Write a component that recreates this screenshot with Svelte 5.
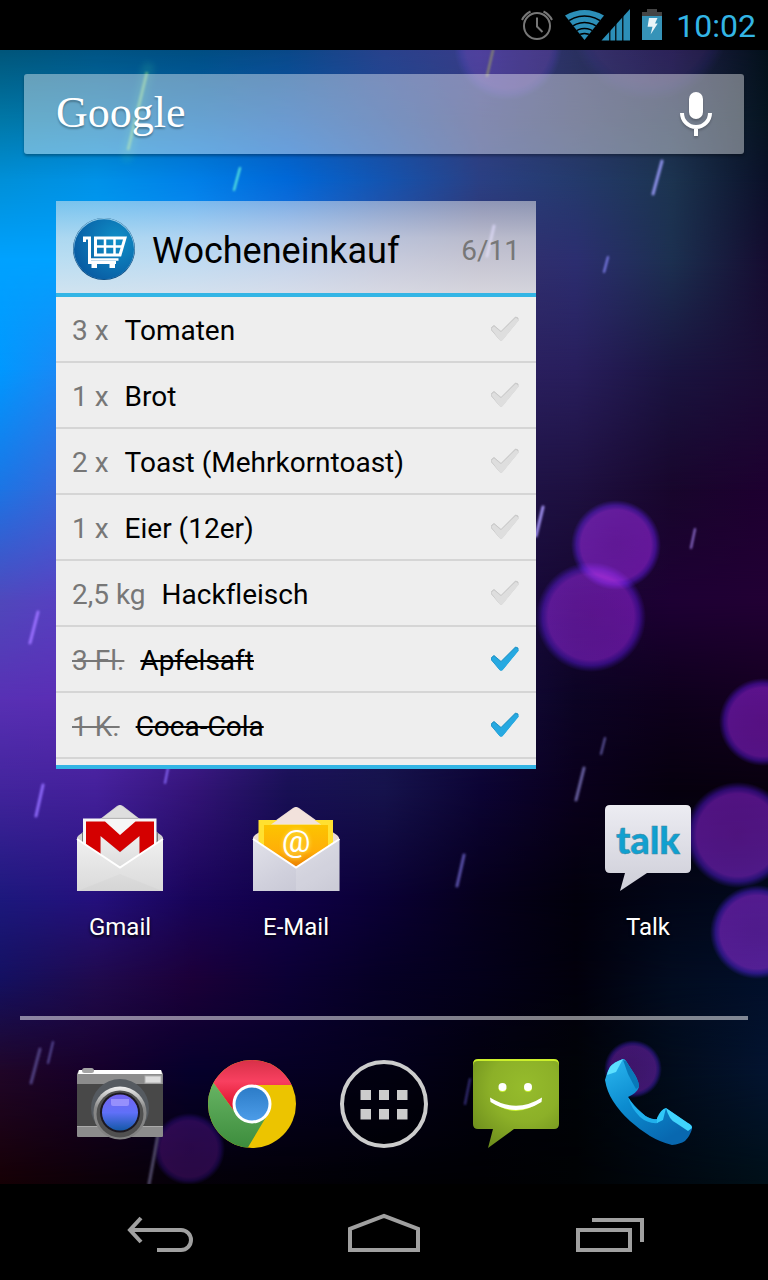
<script lang="ts">
	const items = $state([
		{ amount: '3 x', name: 'Tomaten', done: false },
		{ amount: '1 x', name: 'Brot', done: false },
		{ amount: '2 x', name: 'Toast (Mehrkorntoast)', done: false },
		{ amount: '1 x', name: 'Eier (12er)', done: false },
		{ amount: '2,5 kg', name: 'Hackfleisch', done: false },
		{ amount: '3 Fl.', name: 'Apfelsaft', done: true },
		{ amount: '1 K.', name: 'Coca-Cola', done: true }
	])

	// wallpaper colours: one row per height, nine stops from left to right
	const rows = [
		{ y: 50, stops: ['#00567a', '#005484', '#004e82', '#0a4888', '#28428c', '#383c88', '#2a3060', '#201f48', '#03101a'] },
		{ y: 120, stops: ['#0078a8', '#0074b0', '#0066b4', '#0a58b0', '#1c4a98', '#303c7c', '#2a3560', '#1a2a48', '#061420'] },
		{ y: 180, stops: ['#0090d8', '#0092e8', '#0080e8', '#0068d8', '#1454b0', '#2a4084', '#243a6c', '#1c3450', '#0a1028'] },
		{ y: 260, stops: ['#00a2ff', '#00a2ff', '#1496ff', '#2c74e0', '#3a4ea0', '#34306c', '#2c2e70', '#1c3050', '#150c30'] },
		{ y: 370, stops: ['#0098ff', '#2a80f0', '#3468d8', '#3850b0', '#343080', '#2c2060', '#281e5c', '#1a1440', '#1a0c34'] },
		{ y: 490, stops: ['#1c74e4', '#4a60d4', '#4a48c0', '#3830a0', '#281c70', '#1e1448', '#1e1040', '#18062c', '#1e0030'] },
		{ y: 600, stops: ['#5048bc', '#5c3cc4', '#5030a8', '#302080', '#1c1458', '#180c40', '#160630', '#1e0034', '#220034'] },
		{ y: 700, stops: ['#5830b4', '#5c2cb4', '#4c24a0', '#2c1870', '#181450', '#140c40', '#0c0424', '#0e001c', '#140020'] },
		{ y: 790, stops: ['#42249c', '#44209a', '#341478', '#181054', '#16134c', '#0c0434', '#0a001c', '#06000e', '#08000e'] },
		{ y: 900, stops: ['#1c187c', '#24107c', '#180458', '#100048', '#0a0034', '#06001c', '#02000c', '#020618', '#020a1e'] },
		{ y: 980, stops: ['#141060', '#200a4c', '#1c0038', '#0c0034', '#060024', '#04001a', '#02000c', '#020c20', '#020f2a'] },
		{ y: 1070, stops: ['#200628', '#16002a', '#06002c', '#060024', '#04001c', '#02000e', '#010308', '#020c1c', '#031430'] },
		{ y: 1184, stops: ['#160004', '#0c0008', '#040008', '#020006', '#000004', '#000003', '#000204', '#000810', '#001018'] }
	]

	const bokeh = [
		{ x: 508, y: 46, r: 54, o: 0.3 },
		{ x: 650, y: 20, r: 80, o: 0.15 },
		{ x: 616, y: 545, r: 45, o: 0.85 },
		{ x: 591, y: 617, r: 55, o: 0.8 },
		{ x: 763, y: 722, r: 44, o: 0.8 },
		{ x: 738, y: 835, r: 53, o: 0.8 },
		{ x: 757, y: 932, r: 47, o: 0.85 },
		{ x: 633, y: 1069, r: 29, o: 0.65 },
		{ x: 189, y: 1149, r: 36, o: 0.4 }
	]

	const streaks = [
		{ d: 'M240 168L234 190', c: '#5ff0e0', w: 2 },
		{ d: 'M493 50L487 76', c: '#8a8a70', w: 2 },
		{ d: 'M662 161L653 194', c: '#8c90e8', w: 3 },
		{ d: 'M608 257L604 272', c: '#8080f0', w: 2 },
		{ d: 'M494 226L487 256', c: '#9890e8', w: 3 },
		{ d: 'M543 507L536 536', c: '#a090f0', w: 3 },
		{ d: 'M695 529L691 548', c: '#9070d0', w: 2 },
		{ d: 'M38 612L30 643', c: '#9a70ff', w: 3 },
		{ d: 'M43 785L36 816', c: '#8c68f8', w: 3 },
		{ d: 'M168 768L165 783', c: '#8868f8', w: 2 },
		{ d: 'M605 738L601 754', c: '#6058a0', w: 2 },
		{ d: 'M584 768L576 800', c: '#6860a0', w: 3 },
		{ d: 'M464 855L457 886', c: '#5850a8', w: 3 },
		{ d: 'M53 1042L48 1063', c: '#584c98', w: 2 },
		{ d: 'M40 1049L31 1083', c: '#504080', w: 3 },
		{ d: 'M470 1079L465 1104', c: '#383080', w: 2 },
		{ d: 'M158 1135L149 1184', c: '#504868', w: 3 }
	]
</script>

<div class="phone">
	<header class="statusBar">
		<svg width="34" height="34" viewBox="520 8 34 34" fill="none" stroke="#777" stroke-width="2">
			<circle cx="537" cy="26" r="13" />
			<path d="M537 17.5V26.5L542.5 32" />
			<path d="M522 20Q524.5 14.5 530.5 11.5M552 20Q549.5 14.5 543.5 11.5" />
		</svg>
		<svg class="signal" width="66" height="34" viewBox="565 8 66 34">
			<clipPath id="fan"><path d="M584.5 40L565 15.5Q584.5 4.5 604 15.5Z" /></clipPath>
			<g clip-path="url(#fan)">
				<rect x="565" y="8" width="40" height="34" fill="#2c8fb8" />
				<g fill="none" stroke="#000" stroke-width="1.6">
					<circle cx="584.5" cy="44" r="28" />
					<circle cx="584.5" cy="44" r="21.5" />
					<circle cx="584.5" cy="44" r="15.5" />
					<circle cx="584.5" cy="44" r="10.5" />
				</g>
			</g>
			<path d="M601.5 40.5L630 9V40.5Z" fill="#2c8fb8" />
			<path d="M609.8 20V41M615.8 14V41M622.8 10V41" stroke="#000" stroke-width="1.2" />
		</svg>
		<svg width="20" height="32" viewBox="642 9 20 32">
			<path d="M647 9H657V12H662V16H642V12H647Z" fill="#444" />
			<path d="M642 16H662V40H642Z" fill="#3693b8" />
			<path d="M649 18H657.5L655 23.5H657.7L650.6 34.5L652.5 26.7H647.6Z" fill="#e8f4f8" />
		</svg>
		<time class="clock">10:02</time>
	</header>

	<main class="home">
		<svg class="wallpaper" viewBox="0 50 768 1134" preserveAspectRatio="none" aria-hidden="true">
			<defs>
				{#each rows as row, i}
					<linearGradient id="row{i}" gradientUnits="userSpaceOnUse" x1="0" x2="768" y1="0" y2="0">
						{#each row.stops as color, s}
							<stop offset={s / 8} stop-color={color} />
						{/each}
					</linearGradient>
				{/each}
				<linearGradient id="fade" x2="0" y2="1">
					<stop offset="0" stop-color="#000" />
					<stop offset="1" stop-color="#fff" />
				</linearGradient>
				<mask id="down" maskContentUnits="objectBoundingBox">
					<rect width="1" height="1" fill="url(#fade)" />
				</mask>
				<radialGradient id="bubble">
					<stop offset="0" stop-color="#5c1490" />
					<stop offset="0.78" stop-color="#601698" />
					<stop offset="0.88" stop-color="#4010a8" stop-opacity="0.75" />
					<stop offset="1" stop-color="#2c10a0" stop-opacity="0" />
				</radialGradient>
				<filter id="soft" x="-5" y="-1" width="11" height="3">
					<feGaussianBlur stdDeviation="1" />
				</filter>
				<filter id="glow" x="-2" y="-1" width="5" height="3">
					<feGaussianBlur stdDeviation="3" />
				</filter>
			</defs>
			{#each rows.slice(1) as row, i}
				<rect y={rows[i].y} width="768" height={row.y - rows[i].y + 1} fill="url(#row{i})" />
				<rect y={rows[i].y} width="768" height={row.y - rows[i].y + 1} fill="url(#row{i + 1})" mask="url(#down)" />
			{/each}
			<path d="M148 68L127 156" stroke="#40d0a0" stroke-width="12" stroke-linecap="round" opacity="0.15" filter="url(#glow)" />
			<path d="M147 72L128 150" stroke="#a0e880" stroke-width="3" opacity="0.5" filter="url(#soft)" />
			{#each bokeh as b}
				<circle class="bokeh" cx={b.x} cy={b.y} r={b.r} fill="url(#bubble)" opacity={b.o} />
			{/each}
			{#each streaks as s}
				<path d={s.d} stroke={s.c} stroke-width={s.w} stroke-linecap="round" filter="url(#soft)" />
			{/each}
		</svg>

		<div class="search">
			<button class="logo">Google</button>
			<button class="mic" aria-label="Sprachsuche">
				<svg width="32" height="44" viewBox="680 92 32 44">
					<rect x="689" y="92" width="14" height="27" rx="7" fill="#fff" />
					<path d="M682 113A14 14 0 0 0 710 113M696 126V136" fill="none" stroke="#fff" stroke-width="4" />
				</svg>
			</button>
		</div>

		<div class="workspace">
			<section class="widget">
				<div class="widgetHead">
					<svg width="64" height="64" viewBox="72 217 64 64">
						<defs>
							<radialGradient id="disc" cx="0.7" cy="0.35" r="0.8">
								<stop offset="0" stop-color="#1090c8" />
								<stop offset="1" stop-color="#0858a0" />
							</radialGradient>
						</defs>
						<circle cx="104" cy="249" r="31" fill="#0a4a80" />
						<circle cx="104" cy="248.5" r="30.5" fill="#8cc8e8" />
						<circle cx="104" cy="249.3" r="30" fill="url(#disc)" />
						<g fill="none" stroke="#fff" stroke-width="3">
							<path d="M84.5 242V238H89.5V262.5H116" />
							<path d="M95.5 238H125L120 255H95.5Z" />
							<path d="M105 238V255M114.5 238V255M95.5 246.5H122" stroke-width="2.5" />
							<path d="M90 259.5H118.5" stroke-width="2.5" />
						</g>
						<path d="M91.5 261H97V268H91.5ZM109.5 261H115V268H109.5Z" fill="#fff" />
					</svg>
					<h1>Wocheneinkauf</h1>
					<span class="count">6/11</span>
				</div>
				<ul>
					{#each items as item}
						<li>
							<label class:done={item.done}>
								<span class="amount">{item.amount}</span>
								<span class="name">{item.name}</span>
								<span class="tick">
									<input type="checkbox" bind:checked={item.done} />
									<svg width="32" height="32" viewBox="0 0 32 32">
										<path class="tickEdge" d="M3.5 14.5L6 12.5L13 18.5L27.500 4L30 5V7.500L14 27H12L3.500 17Z" />
										<path class="tickFill" d="M4.500 16L6 14.500L13 20.500L28 6L29.500 7.500L13.800 26.500H12.300Z" />
									</svg>
								</span>
							</label>
						</li>
					{/each}
				</ul>
			</section>

			<a class="app gmail" href="#gmail">
				<svg width="88" height="88" viewBox="0 0 88 88">
					<defs>
						<linearGradient id="white" x2="0" y2="1">
							<stop offset="0" stop-color="#f0f0f0" />
							<stop offset="1" stop-color="#dadada" />
						</linearGradient>
					</defs>
					<path d="M1 34Q1 32 6 29L41 2Q44 0 47 2L82 29Q87 32 87 34V60H1Z" fill="#d0d0d0" />
					<path d="M6 29L26 14H62L82 29V50H6Z" fill="#777" />
					<path d="M27 13.5L44 1L61 13.5Z" fill="#dedede" />
					<path d="M7 14.5H80.5V60H7Z" fill="#f6f6f6" />
					<path d="M24 31L44 48L64 31V66H24Z" fill="url(#white)" stroke="#b8c4c8" stroke-width="1" />
					<path d="M10 17.5H29L44 31L59.5 17.5H78V54H63.5V32L44 48L24.5 32V54H10Z" fill="#d40000" />
					<path d="M1 35L44 63.5L87 35V87H1Z" fill="url(#white)" />
					<path d="M1 87L44 70L87 87Z" fill="#000" opacity="0.02" />
					<path d="M1 35L44 63.5L87 35" fill="none" stroke="#fff" stroke-width="2" />
				</svg>
				<span>Gmail</span>
			</a>
			<a class="app" href="#email">
				<svg width="88" height="88" viewBox="0 0 88 88">
					<defs>
						<linearGradient id="gold" x2="0" y2="1">
							<stop offset="0" stop-color="#fcc400" />
							<stop offset="0.6" stop-color="#ffae08" />
							<stop offset="1" stop-color="#e87800" />
						</linearGradient>
						<linearGradient id="lilac" x2="1" y2="1">
							<stop offset="0" stop-color="#e2e2ea" />
							<stop offset="0.5" stop-color="#d0d0dc" />
							<stop offset="1" stop-color="#c2c2d0" />
						</linearGradient>
					</defs>
					<path d="M1 34Q1 32 6 29L41 4Q44 2 47 4L82 29Q87 32 87 34V60H1Z" fill="#ecdcd4" />
					<path d="M6.5 16H81V60H6.5Z" fill="#ffe030" />
					<path d="M12 21H76V48L44 65L12 48Z" fill="url(#gold)" />
					<path d="M19 20.5L44 3L69 20.5Z" fill="#f2e2dc" />
					<text class="at" x="44" y="48">@</text>
					<path d="M1 35L44 63.5L87.5 35V87H1Z" fill="url(#lilac)" />
					<path d="M44 63.5L87.5 35V87H44Z" fill="#fff" opacity="0.15" />
					<path d="M1 35L44 63.5L87.5 35" fill="none" stroke="#fff" stroke-width="2" />
				</svg>
				<span>E-Mail</span>
			</a>
			<a class="app talk" href="#talk">
				<svg width="88" height="88" viewBox="0 0 88 88">
					<defs>
						<linearGradient id="paper" x2="0" y2="1">
							<stop offset="0" stop-color="#ececf2" />
							<stop offset="1" stop-color="#ceced8" />
						</linearGradient>
					</defs>
					<path d="M6 1H82Q87 1 87 6V64Q87 69 82 69H43L16 87L21 69H6Q1 69 1 64V6Q1 1 6 1Z" fill="url(#paper)" />
					<text class="talkText" x="44" y="50">talk</text>
				</svg>
				<span>Talk</span>
			</a>
		</div>

		<hr />

		<nav class="dock">
			<a href="#camera" aria-label="Kamera">
				<svg width="88" height="88" viewBox="0 0 88 88">
					<defs>
						<linearGradient id="ring" x2="0" y2="1">
							<stop offset="0" stop-color="#f0f0f0" />
							<stop offset="0.4" stop-color="#888" />
							<stop offset="1" stop-color="#808080" />
						</linearGradient>
						<linearGradient id="lens" x2="0" y2="1">
							<stop offset="0" stop-color="#7464f0" />
							<stop offset="0.5" stop-color="#6070f8" />
							<stop offset="1" stop-color="#1458a8" />
						</linearGradient>
					</defs>
					<path d="M3 10H85L87 14V76Q87 77 86 77H2Q1 77 1 76V14Z" fill="#8c8c8c" />
					<path d="M3 10H85L86 14H2Z" fill="#fff" />
					<rect x="6" y="8" width="12" height="5" rx="2.5" fill="#a4a4a4" />
					<rect x="1" y="24" width="86" height="42" fill="#484848" />
					<rect x="1" y="66" width="86" height="1" fill="#aaa" />
					<rect x="69" y="16" width="16" height="7" fill="#ddd" stroke="#b0b0b0" stroke-width="1" />
					<circle cx="44" cy="48" r="29" fill="#555a60" />
					<circle cx="44" cy="53" r="26.5" fill="url(#ring)" />
					<circle cx="44" cy="54" r="23.5" fill="#505050" />
					<circle cx="44" cy="52.5" r="20" fill="#1c1820" />
					<circle cx="44" cy="52.5" r="18" fill="url(#lens)" />
					<path d="M35 39H53V44Q53 46 51 46H37Q35 46 35 44Z" fill="#a8a0ff" opacity="0.7" />
				</svg>
			</a>
			<a href="#chrome" aria-label="Chrome">
				<svg width="88" height="88" viewBox="0 0 88 88">
					<defs>
						<clipPath id="wheel"><circle cx="44" cy="44" r="44" /></clipPath>
						<linearGradient id="red" x2="0" y2="1">
							<stop offset="0" stop-color="#d83048" />
							<stop offset="0.4" stop-color="#f84060" />
							<stop offset="1" stop-color="#d80820" />
						</linearGradient>
						<linearGradient id="green" x2="0" y2="1">
							<stop offset="0" stop-color="#6cb868" />
							<stop offset="1" stop-color="#3c8c3c" />
						</linearGradient>
						<linearGradient id="blue" x2="0" y2="1">
							<stop offset="0" stop-color="#2c7cc8" />
							<stop offset="1" stop-color="#4c9ce8" />
						</linearGradient>
					</defs>
					<g clip-path="url(#wheel)">
						<rect width="88" height="88" fill="#ecc400" />
						<path d="M0 15.5V0H88V25H44V43L27.5 53Z" fill="url(#red)" />
						<path d="M0 15.500L27.500 53L44 43L60.500 53L39 89H0Z" fill="url(#green)" />
						<circle cx="44" cy="44" r="19.5" fill="#fff" />
						<circle cx="44" cy="44" r="16.5" fill="url(#blue)" />
					</g>
				</svg>
			</a>
			<button aria-label="Apps">
				<svg width="88" height="88" viewBox="0 0 88 88">
					<circle cx="44" cy="44" r="42" fill="#000" fill-opacity="0.4" stroke="#ccc" stroke-width="4" />
					<path
						d="M20.5 30H31V40H20.5ZM39 30H49V40H39ZM57 30H67.5V40H57ZM20.5 49H31V59.5H20.5ZM39 49H49V59.5H39ZM57 49H67.5V59.5H57Z"
						fill="#ccc"
					/>
				</svg>
			</button>
			<a href="#sms" aria-label="SMS">
				<svg width="88" height="88" viewBox="0 0 88 88">
					<defs>
						<radialGradient id="lime" cx="0.6" cy="0.3" r="0.8">
							<stop offset="0" stop-color="#96bc2c" />
							<stop offset="0.5" stop-color="#8cb028" />
							<stop offset="1" stop-color="#6c8c1c" />
						</radialGradient>
					</defs>
					<path d="M6 -1H82Q87 -1 87 4V20H1V4Q1 -1 6 -1Z" fill="#ccf02c" />
					<path d="M6 1H82Q87 1 87 6V64Q87 69 82 69H42L16 88L21 69H6Q1 69 1 64V6Q1 1 6 1Z" fill="url(#lime)" />
					<path d="M26.5 28A4 4 0 0 0 34.5 28ZM52 28A4 4 0 0 0 60 28ZM18 40Q44 62 70 40Q44 58 18 40Z" fill="#c8f030" />
					<circle cx="30.5" cy="27" r="4" fill="#fff" />
					<circle cx="56" cy="27" r="4" fill="#fff" />
					<path d="M18 37.5Q44 54 70 37.5L69.5 42Q44 58 18.5 42Z" fill="#fff" />
				</svg>
			</a>
			<a href="#phone" aria-label="Telefon">
				<svg width="88" height="88" viewBox="0 0 88 88">
					<defs>
						<linearGradient id="handset" x2="0.6" y2="1">
							<stop offset="0" stop-color="#2cb8f0" />
							<stop offset="0.5" stop-color="#0c8cd0" />
							<stop offset="1" stop-color="#0868b0" />
						</linearGradient>
					</defs>
					<path
						d="M19 -1Q10 2 6 7Q3 12 1 20Q3 32 9 41Q16 52 26 61Q36 70 46 76Q56 82 68 85Q76 84 81 81Q86 76 88 69V66Q86 64 82 62L62 48Q58 50 56 54L53 59Q45 60 38 53Q29 45 24 37Q33 33 35 27Q35 22 31 15L22 1Q21 -1 19 -1Z"
						fill="url(#handset)"
					/>
					<path d="M19 -1Q10 2 6 7Q4 10 3 15L12 12Z" fill="#5ce0ff" />
					<path d="M19 0L22 1L31 15Q35 22 35 27L32 29Q28 22 24 14Z" fill="#0878b8" />
					<path d="M62 48L84 63Q88 65 88 68L84 71L72 63Q65 60 62 48Z" fill="#40d4fc" />
					<path d="M24 37Q29 46 38 53Q45 60 53 59L54 63Q44 64 36 57Q27 48 24 37Z" fill="#20b0ec" />
					<path d="M62 48L59 60L53 63L53 58Q57 49 62 48Z" fill="#30c8f8" />
				</svg>
			</a>
		</nav>
	</main>

	<footer class="navBar">
		<button aria-label="Zurück">
			<svg width="72" height="40" viewBox="124 1212 72 40">
				<path d="M141 1218L130 1230L141 1242" />
				<path d="M130 1230H181A10 10 0 0 1 181 1250H157" />
			</svg>
		</button>
		<button aria-label="Startseite">
			<svg width="72" height="40" viewBox="348 1212 72 40">
				<path d="M350 1250V1229L384 1216L418 1229V1250Z" />
			</svg>
		</button>
		<button aria-label="Letzte Apps">
			<svg width="72" height="40" viewBox="572 1212 72 40">
				<path d="M578 1230H630V1250H578ZM592 1220H642V1242" />
			</svg>
		</button>
	</footer>
</div>

<style>
	:global(body) {
		margin: 0;
		background: #000;
	}
	.phone {
		display: flex;
		flex-direction: column;
		min-height: 100vh;
		font-family: Roboto, 'Liberation Sans', sans-serif;
		font-variant-ligatures: none;
		color: #fff;
	}
	svg {
		display: block;
		overflow: visible;
		flex: none;
	}
	button {
		border: 0;
		padding: 0;
		background: none;
		color: inherit;
		font: inherit;
		cursor: pointer;
	}

	.statusBar {
		display: flex;
		align-items: center;
		justify-content: flex-end;
		height: 50px;
		padding: 0 12px;
		background: #000;
	}
	.signal {
		margin: 0 11px;
	}
	.clock {
		margin-left: 14px;
		padding-top: 2px;
		font-size: 32px;
		line-height: 40px;
		color: #33b5e5;
	}

	.home {
		position: relative;
		z-index: 0;
		flex: 1;
		display: flex;
		flex-direction: column;
	}
	.wallpaper {
		position: absolute;
		inset: 0;
		width: 100%;
		height: 100%;
		z-index: -1;
		overflow: hidden;
	}
	.bokeh {
		mix-blend-mode: screen;
	}

	.search {
		display: flex;
		align-items: center;
		justify-content: space-between;
		height: 80px;
		margin: 24px 24px 0;
		padding: 0 32px;
		border-radius: 3px;
		background: rgba(255, 255, 255, 0.4);
		box-shadow: 0 2px 3px rgba(0, 0, 0, 0.3);
	}
	.logo {
		padding-bottom: 2px;
		font-family: 'Liberation Serif', serif;
		font-size: 44px;
		line-height: 48px;
		text-shadow: 0 2px 2px rgba(0, 0, 0, 0.3);
	}
	.mic {
		filter: drop-shadow(0 2px 1px rgba(0, 0, 0, 0.2));
	}

	.workspace {
		flex: 1;
		display: grid;
		grid-template-columns: repeat(4, 1fr);
		align-content: start;
		row-gap: 35px;
		padding: 47px 32px 0;
	}
	.widget {
		grid-column: 1 / 4;
		margin: 0 24px;
		color: #000;
	}
	.widgetHead {
		display: flex;
		align-items: center;
		gap: 16px;
		height: 88px;
		padding: 4px 16px 0;
		border-bottom: 4px solid #33b5e5;
		background: linear-gradient(rgba(240, 240, 240, 0.5), rgba(238, 238, 238, 0.72) 40%, rgba(238, 238, 238, 0.87)) padding-box;
	}
	h1 {
		flex: 1;
		margin: 0;
		padding-top: 4px;
		font-size: 36px;
		font-weight: 400;
		line-height: 44px;
	}
	.count {
		padding-top: 4px;
		font-size: 28px;
		line-height: 36px;
		color: #777;
	}
	ul {
		margin: 0;
		padding: 0 0 6px;
		list-style: none;
		background: #eee;
		border-bottom: 4px solid #33b5e5;
	}
	label {
		display: flex;
		align-items: center;
		gap: 16px;
		height: 64px;
		padding: 0 16px;
		border-bottom: 2px solid #d5d5d5;
		font-size: 28px;
		line-height: 36px;
	}
	.amount,
	.name {
		padding-top: 4px;
	}
	.amount {
		color: #777;
	}
	.done .amount,
	.done .name {
		text-decoration: line-through;
		text-decoration-thickness: 2px;
	}
	.tick {
		display: grid;
		margin-left: auto;
	}
	.tick > * {
		grid-area: 1 / 1;
	}
	input {
		appearance: none;
		width: 32px;
		height: 32px;
		margin: 0;
	}
	.tick svg {
		pointer-events: none;
	}
	.tickEdge {
		fill: #c8c8c8;
		stroke: #c8c8c8;
		stroke-linejoin: round;
	}
	.tickFill {
		fill: #dedede;
		stroke: #dedede;
		stroke-width: 2px;
		stroke-linejoin: round;
	}
	.done .tickEdge {
		fill: #1f94c8;
		stroke: #1f94c8;
	}
	.done .tickFill {
		fill: #27a9e1;
		stroke: #27a9e1;
	}

	.app {
		display: flex;
		flex-direction: column;
		align-items: center;
		gap: 19px;
		color: #fff;
		text-decoration: none;
		font-size: 24px;
		line-height: 32px;
		text-shadow: 0 2px 3px #000;
	}
	.gmail {
		grid-column: 1;
	}
	.talk {
		grid-column: 4;
	}
	.at {
		font-size: 32px;
		fill: #fff;
		text-anchor: middle;
		text-shadow: 0 0 4px #ffe860;
	}
	.talkText {
		font-family: Lato, sans-serif;
		font-size: 38px;
		font-weight: 900;
		fill: #10a0d0;
		stroke: #4888a0;
		stroke-width: 0.5px;
		text-anchor: middle;
		text-shadow: none;
	}

	hr {
		width: auto;
		height: 4px;
		margin: 0 20px;
		border: 0;
		background: rgba(255, 255, 255, 0.5);
	}
	.dock {
		display: grid;
		grid-template-columns: repeat(5, 1fr);
		justify-items: center;
		padding: 40px 54px 36px;
	}

	.navBar {
		display: grid;
		grid-template-columns: repeat(3, 1fr);
		height: 96px;
		padding: 0 48px;
		background: #000;
	}
	.navBar button {
		display: grid;
		place-items: center;
	}
	.navBar svg {
		fill: none;
		stroke: #a0a0a0;
		stroke-width: 4px;
	}
</style>
